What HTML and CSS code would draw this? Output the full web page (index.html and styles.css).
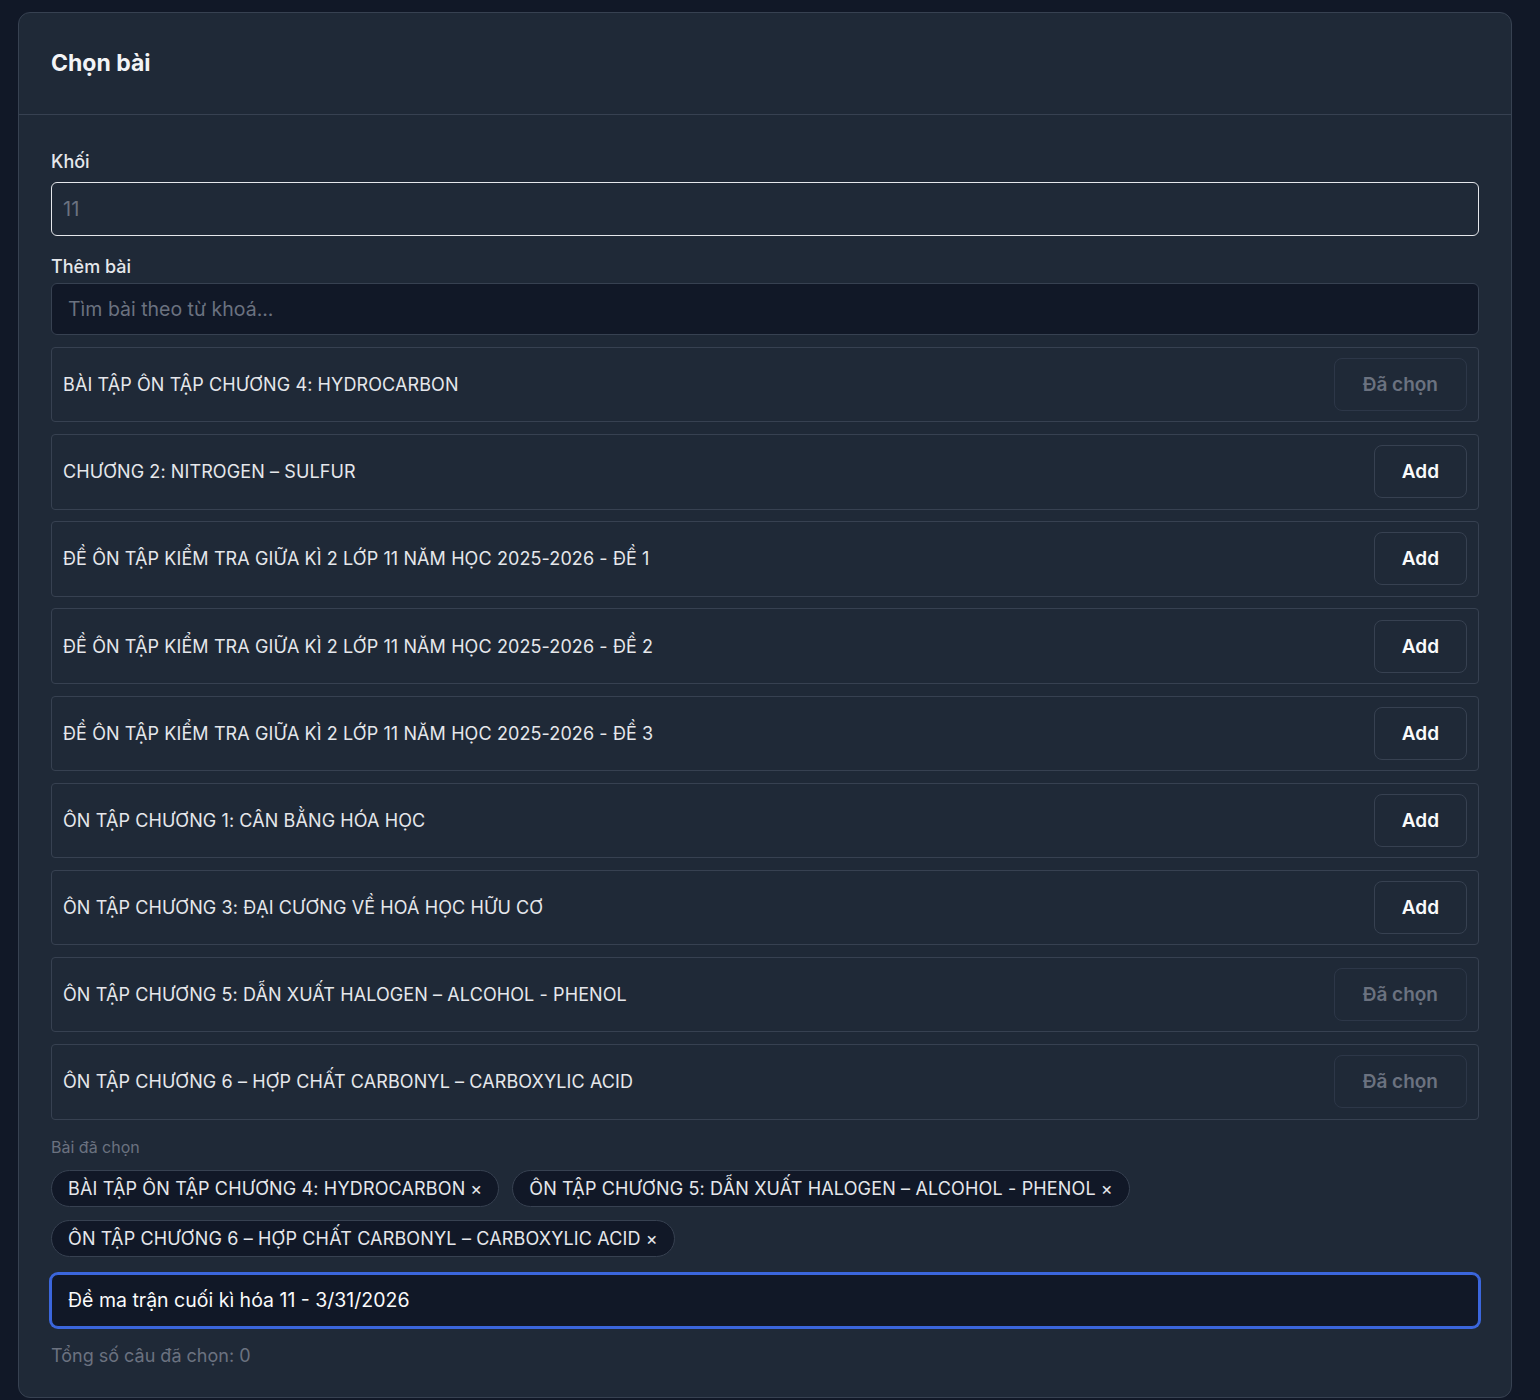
FILE: index.html
```html
<!DOCTYPE html>
<html lang="vi">
<head>
    <meta charset="UTF-8">
    <meta name="viewport" content="width=device-width, initial-scale=1.0">
    <title>Chọn bài</title>
    <link rel="stylesheet" href="styles.css">
</head>
<body>

<div class="pick-card">
    <div class="pick-header">
        <h2>Chọn bài</h2>
    </div>
    <div class="pick-body">
        <label class="field-label label-grade">Khối</label>
        <input type="text" class="grade-input" placeholder="11">

        <label class="field-label label-add">Thêm bài</label>
        <input type="text" class="search-input" placeholder="Tìm bài theo từ khoá...">

        <ul class="lesson-list" id="lessonList"></ul>

        <div class="picked-title">Bài đã chọn</div>
        <div class="chips" id="chips"></div>

        <input type="text" class="name-input" value="Đề ma trận cuối kì hóa 11 - 3/31/2026">
        <div class="total">Tổng số câu đã chọn: 0</div>
    </div>
</div>

<script>
    const lessons = [
        "BÀI TẬP ÔN TẬP CHƯƠNG 4: HYDROCARBON",
        "CHƯƠNG 2: NITROGEN – SULFUR",
        "ĐỀ ÔN TẬP KIỂM TRA GIỮA KÌ 2 LỚP 11 NĂM HỌC 2025-2026 - ĐỀ 1",
        "ĐỀ ÔN TẬP KIỂM TRA GIỮA KÌ 2 LỚP 11 NĂM HỌC 2025-2026 - ĐỀ 2",
        "ĐỀ ÔN TẬP KIỂM TRA GIỮA KÌ 2 LỚP 11 NĂM HỌC 2025-2026 - ĐỀ 3",
        "ÔN TẬP CHƯƠNG 1: CÂN BẰNG HÓA HỌC",
        "ÔN TẬP CHƯƠNG 3: ĐẠI CƯƠNG VỀ HOÁ HỌC HỮU CƠ",
        "ÔN TẬP CHƯƠNG 5: DẪN XUẤT HALOGEN – ALCOHOL - PHENOL",
        "ÔN TẬP CHƯƠNG 6 – HỢP CHẤT CARBONYL – CARBOXYLIC ACID"
    ];
    let picked = [0, 7, 8];

    function render() {
        const list = document.getElementById("lessonList");
        list.innerHTML = "";
        lessons.forEach((name, i) => {
            const done = picked.includes(i);
            const li = document.createElement("li");
            li.className = "lesson-row";
            li.innerHTML = `
                <span class="lesson-name">${name}</span>
                <button class="${done ? 'picked-btn' : 'add-btn'}" ${done ? 'disabled' : ''}
                    onclick="addLesson(${i})">${done ? 'Đã chọn' : 'Add'}</button>
            `;
            list.appendChild(li);
        });

        const chips = document.getElementById("chips");
        chips.innerHTML = "";
        picked.forEach(i => {
            const chip = document.createElement("span");
            chip.className = "chip";
            chip.innerHTML = `${lessons[i]} <button class="chip-x" onclick="removeLesson(${i})">×</button>`;
            chips.appendChild(chip);
        });
    }

    function addLesson(i) {
        if (!picked.includes(i)) picked.push(i);
        render();
    }

    function removeLesson(i) {
        picked = picked.filter(p => p !== i);
        render();
    }

    render();
</script>

</body>
</html>
```

FILE: styles.css
```css
body {
    font-family: 'Inter', 'Noto Sans', sans-serif;
    background-color: #111827;
    margin: 0;
    padding: 12px 28px 0 18px;
    color: #e5e7eb;
}
.pick-card {
    background: #1f2937;
    border: 1px solid #374151;
    border-radius: 12px;
    min-height: 1386px;
    box-sizing: border-box;
}
.pick-header {
    padding: 32px 32px 32px;
    border-bottom: 1px solid #374151;
}
.pick-header h2 {
    margin: 0;
    font-size: 23px;
    line-height: 37px;
    font-weight: 700;
    color: #f3f4f6;
}
.pick-body {
    padding: 35px 32px 24px;
    display: flex;
    flex-direction: column;
}
.field-label {
    font-size: 18px;
    font-weight: 500;
    line-height: 24px;
    color: #e5e7eb;
}
.label-grade {
    margin-bottom: 8px;
}
.label-add {
    margin-top: 19px;
    margin-bottom: 4px;
}
.grade-input,
.search-input,
.name-input {
    font-family: inherit;
    box-sizing: border-box;
    width: 100%;
    outline: none;
}
.grade-input {
    height: 54px;
    padding: 0 11px;
    font-size: 20px;
    background: #1f2937;
    border: 1px solid #e5e7eb;
    border-radius: 6px;
    color: #e5e7eb;
}
.grade-input::placeholder {
    color: #6b7280;
}
.search-input {
    height: 52px;
    padding: 0 16px;
    font-size: 19.5px;
    background: #111827;
    border: 1px solid #374151;
    border-radius: 6px;
    color: #e5e7eb;
}
.search-input::placeholder {
    color: #6b7280;
}
.lesson-list {
    list-style: none;
    margin: 12px 0 0;
    padding: 0;
    display: flex;
    flex-direction: column;
    gap: 11.75px;
}
.lesson-row {
    display: flex;
    align-items: center;
    justify-content: space-between;
    height: 75.4px;
    box-sizing: border-box;
    padding: 0 11px;
    border: 1px solid #374151;
    border-radius: 4px;
}
.lesson-name {
    font-size: 18px;
    letter-spacing: 0.1px;
    color: #e5e7eb;
}
.add-btn,
.picked-btn {
    font-family: inherit;
    font-size: 19px;
    font-weight: 600;
    line-height: 23px;
    padding: 14px 27px;
    background: transparent;
    border: 1px solid #374151;
    border-radius: 8px;
    cursor: pointer;
}
.add-btn {
    color: #f9fafb;
}
.add-btn:hover {
    background: #374151;
}
.picked-btn {
    padding: 14px 28px;
    color: #6b7280;
    border-color: #2d3748;
    cursor: default;
}
.picked-title {
    margin-top: 15px;
    font-size: 16px;
    line-height: 24px;
    color: #6b7280;
}
.chips {
    display: flex;
    flex-wrap: wrap;
    gap: 13px;
    margin-top: 11px;
}
.chip {
    display: inline-flex;
    align-items: center;
    height: 37px;
    box-sizing: border-box;
    padding: 0 16px;
    font-size: 18px;
    letter-spacing: 0.15px;
    background: #111827;
    border: 1px solid #374151;
    border-radius: 999px;
    color: #e5e7eb;
}
.chip-x {
    margin-left: 5px;
    padding: 0;
    font-family: inherit;
    font-size: 18px;
    background: none;
    border: none;
    color: #e5e7eb;
    cursor: pointer;
}
.name-input {
    margin-top: 17px;
    height: 53px;
    padding: 0 16px;
    font-size: 19.5px;
    background: #111827;
    border: 1px solid #3b66dc;
    box-shadow: 0 0 0 2px #3b66dc;
    border-radius: 7px;
    color: #f9fafb;
}
.total {
    margin-top: 17px;
    font-size: 18px;
    line-height: 24px;
    color: #6b7280;
}
```
